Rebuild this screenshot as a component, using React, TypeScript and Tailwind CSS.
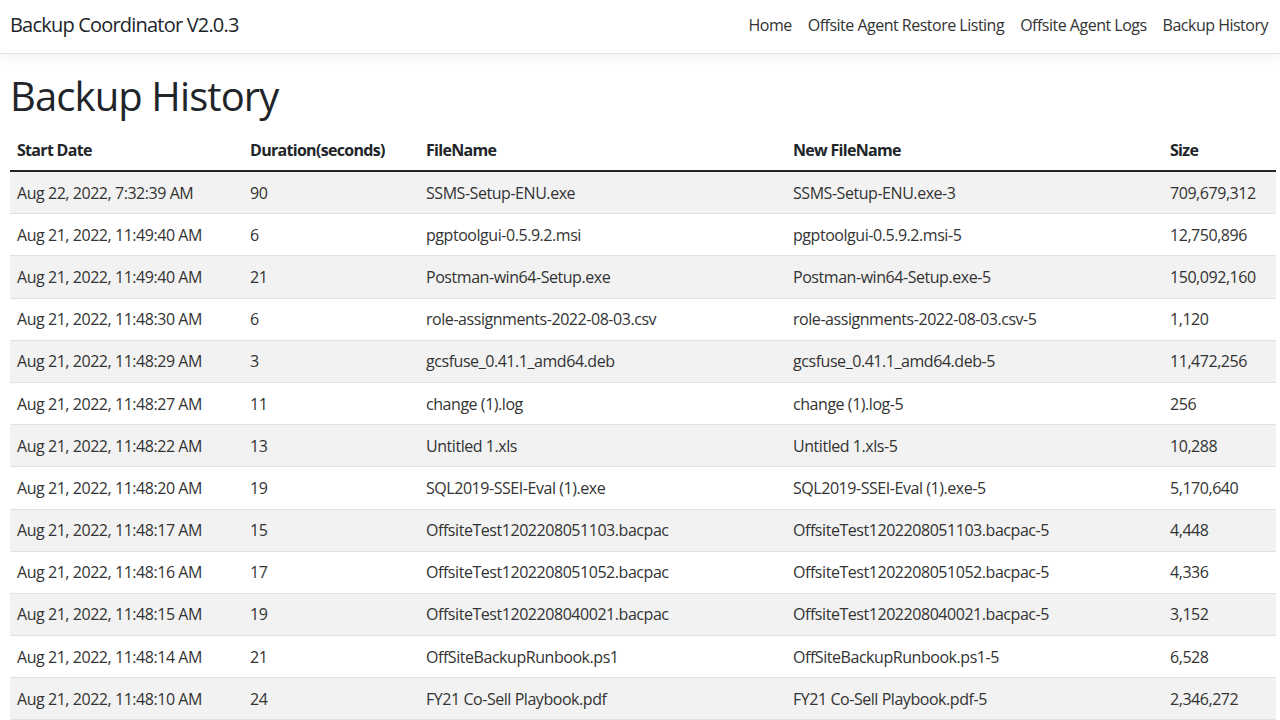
const rows = [
  { start: "Aug 22, 2022, 7:32:39 AM", duration: "90", file: "SSMS-Setup-ENU.exe", newFile: "SSMS-Setup-ENU.exe-3", size: "709,679,312" },
  { start: "Aug 21, 2022, 11:49:40 AM", duration: "6", file: "pgptoolgui-0.5.9.2.msi", newFile: "pgptoolgui-0.5.9.2.msi-5", size: "12,750,896" },
  { start: "Aug 21, 2022, 11:49:40 AM", duration: "21", file: "Postman-win64-Setup.exe", newFile: "Postman-win64-Setup.exe-5", size: "150,092,160" },
  { start: "Aug 21, 2022, 11:48:30 AM", duration: "6", file: "role-assignments-2022-08-03.csv", newFile: "role-assignments-2022-08-03.csv-5", size: "1,120" },
  { start: "Aug 21, 2022, 11:48:29 AM", duration: "3", file: "gcsfuse_0.41.1_amd64.deb", newFile: "gcsfuse_0.41.1_amd64.deb-5", size: "11,472,256" },
  { start: "Aug 21, 2022, 11:48:27 AM", duration: "11", file: "change (1).log", newFile: "change (1).log-5", size: "256" },
  { start: "Aug 21, 2022, 11:48:22 AM", duration: "13", file: "Untitled 1.xls", newFile: "Untitled 1.xls-5", size: "10,288" },
  { start: "Aug 21, 2022, 11:48:20 AM", duration: "19", file: "SQL2019-SSEI-Eval (1).exe", newFile: "SQL2019-SSEI-Eval (1).exe-5", size: "5,170,640" },
  { start: "Aug 21, 2022, 11:48:17 AM", duration: "15", file: "OffsiteTest1202208051103.bacpac", newFile: "OffsiteTest1202208051103.bacpac-5", size: "4,448" },
  { start: "Aug 21, 2022, 11:48:16 AM", duration: "17", file: "OffsiteTest1202208051052.bacpac", newFile: "OffsiteTest1202208051052.bacpac-5", size: "4,336" },
  { start: "Aug 21, 2022, 11:48:15 AM", duration: "19", file: "OffsiteTest1202208040021.bacpac", newFile: "OffsiteTest1202208040021.bacpac-5", size: "3,152" },
  { start: "Aug 21, 2022, 11:48:14 AM", duration: "21", file: "OffSiteBackupRunbook.ps1", newFile: "OffSiteBackupRunbook.ps1-5", size: "6,528" },
  { start: "Aug 21, 2022, 11:48:10 AM", duration: "24", file: "FY21 Co-Sell Playbook.pdf", newFile: "FY21 Co-Sell Playbook.pdf-5", size: "2,346,272" },
]

const navLinks = ["Home", "Offsite Agent Restore Listing", "Offsite Agent Logs", "Backup History"]

export default function App() {
  return (
    <div className="h-screen overflow-hidden bg-white text-[#212529] font-['Open_Sans',sans-serif]">
      {/* navbar */}
      <header className="h-[54px] border-b border-[#dee2e6] bg-white shadow-[0_4px_12px_rgba(0,0,0,0.05)]">
        <div className="flex h-full items-center justify-between pb-[3px] pl-[10px] pr-[4px]">
          <span className="text-[20px] leading-[30px] tracking-[-0.8px] text-[#212529]">Backup Coordinator V2.0.3</span>
          <nav className="flex items-center">
            {navLinks.map((link) => (
              <a key={link} href="#" className="px-2 text-[16px] leading-6 tracking-[-0.5px] text-[#333]">
                {link}
              </a>
            ))}
          </nav>
        </div>
      </header>

      <main className="px-[10px] pt-[16px]">
        <h1 className="mb-[8px] text-[40px] font-medium leading-[52px] tracking-[-0.9px]">Backup History</h1>

        <table className="w-[1266px] table-fixed border-collapse text-left text-[16px] tracking-[-0.45px]">
          <colgroup>
            <col className="w-[233px]" />
            <col className="w-[176px]" />
            <col className="w-[367px]" />
            <col className="w-[377px]" />
            <col className="w-[113px]" />
          </colgroup>
          <thead>
            <tr className="border-b-2 border-[#212529]">
              {["Start Date", "Duration(seconds)", "FileName", "New FileName", "Size"].map((h) => (
                <th key={h} className="px-[7px] py-[8px] font-bold leading-6 tracking-[-0.7px]">
                  {h}
                </th>
              ))}
            </tr>
          </thead>
          <tbody className="text-[#333]">
            {rows.map((r, i) => (
              <tr key={i} className={`border-b border-[#dee2e6] ${i % 2 === 0 ? "bg-[#f2f2f2]" : "bg-white"}`}>
                <td className="px-[7px] py-[8.6px] leading-6 whitespace-nowrap">{r.start}</td>
                <td className="px-[7px] py-[8.6px] leading-6">{r.duration}</td>
                <td className="px-[7px] py-[8.6px] leading-6 whitespace-nowrap">{r.file}</td>
                <td className="px-[7px] py-[8.6px] leading-6 whitespace-nowrap">{r.newFile}</td>
                <td className="px-[7px] py-[8.6px] leading-6">{r.size}</td>
              </tr>
            ))}
          </tbody>
        </table>
      </main>
    </div>
  )
}
